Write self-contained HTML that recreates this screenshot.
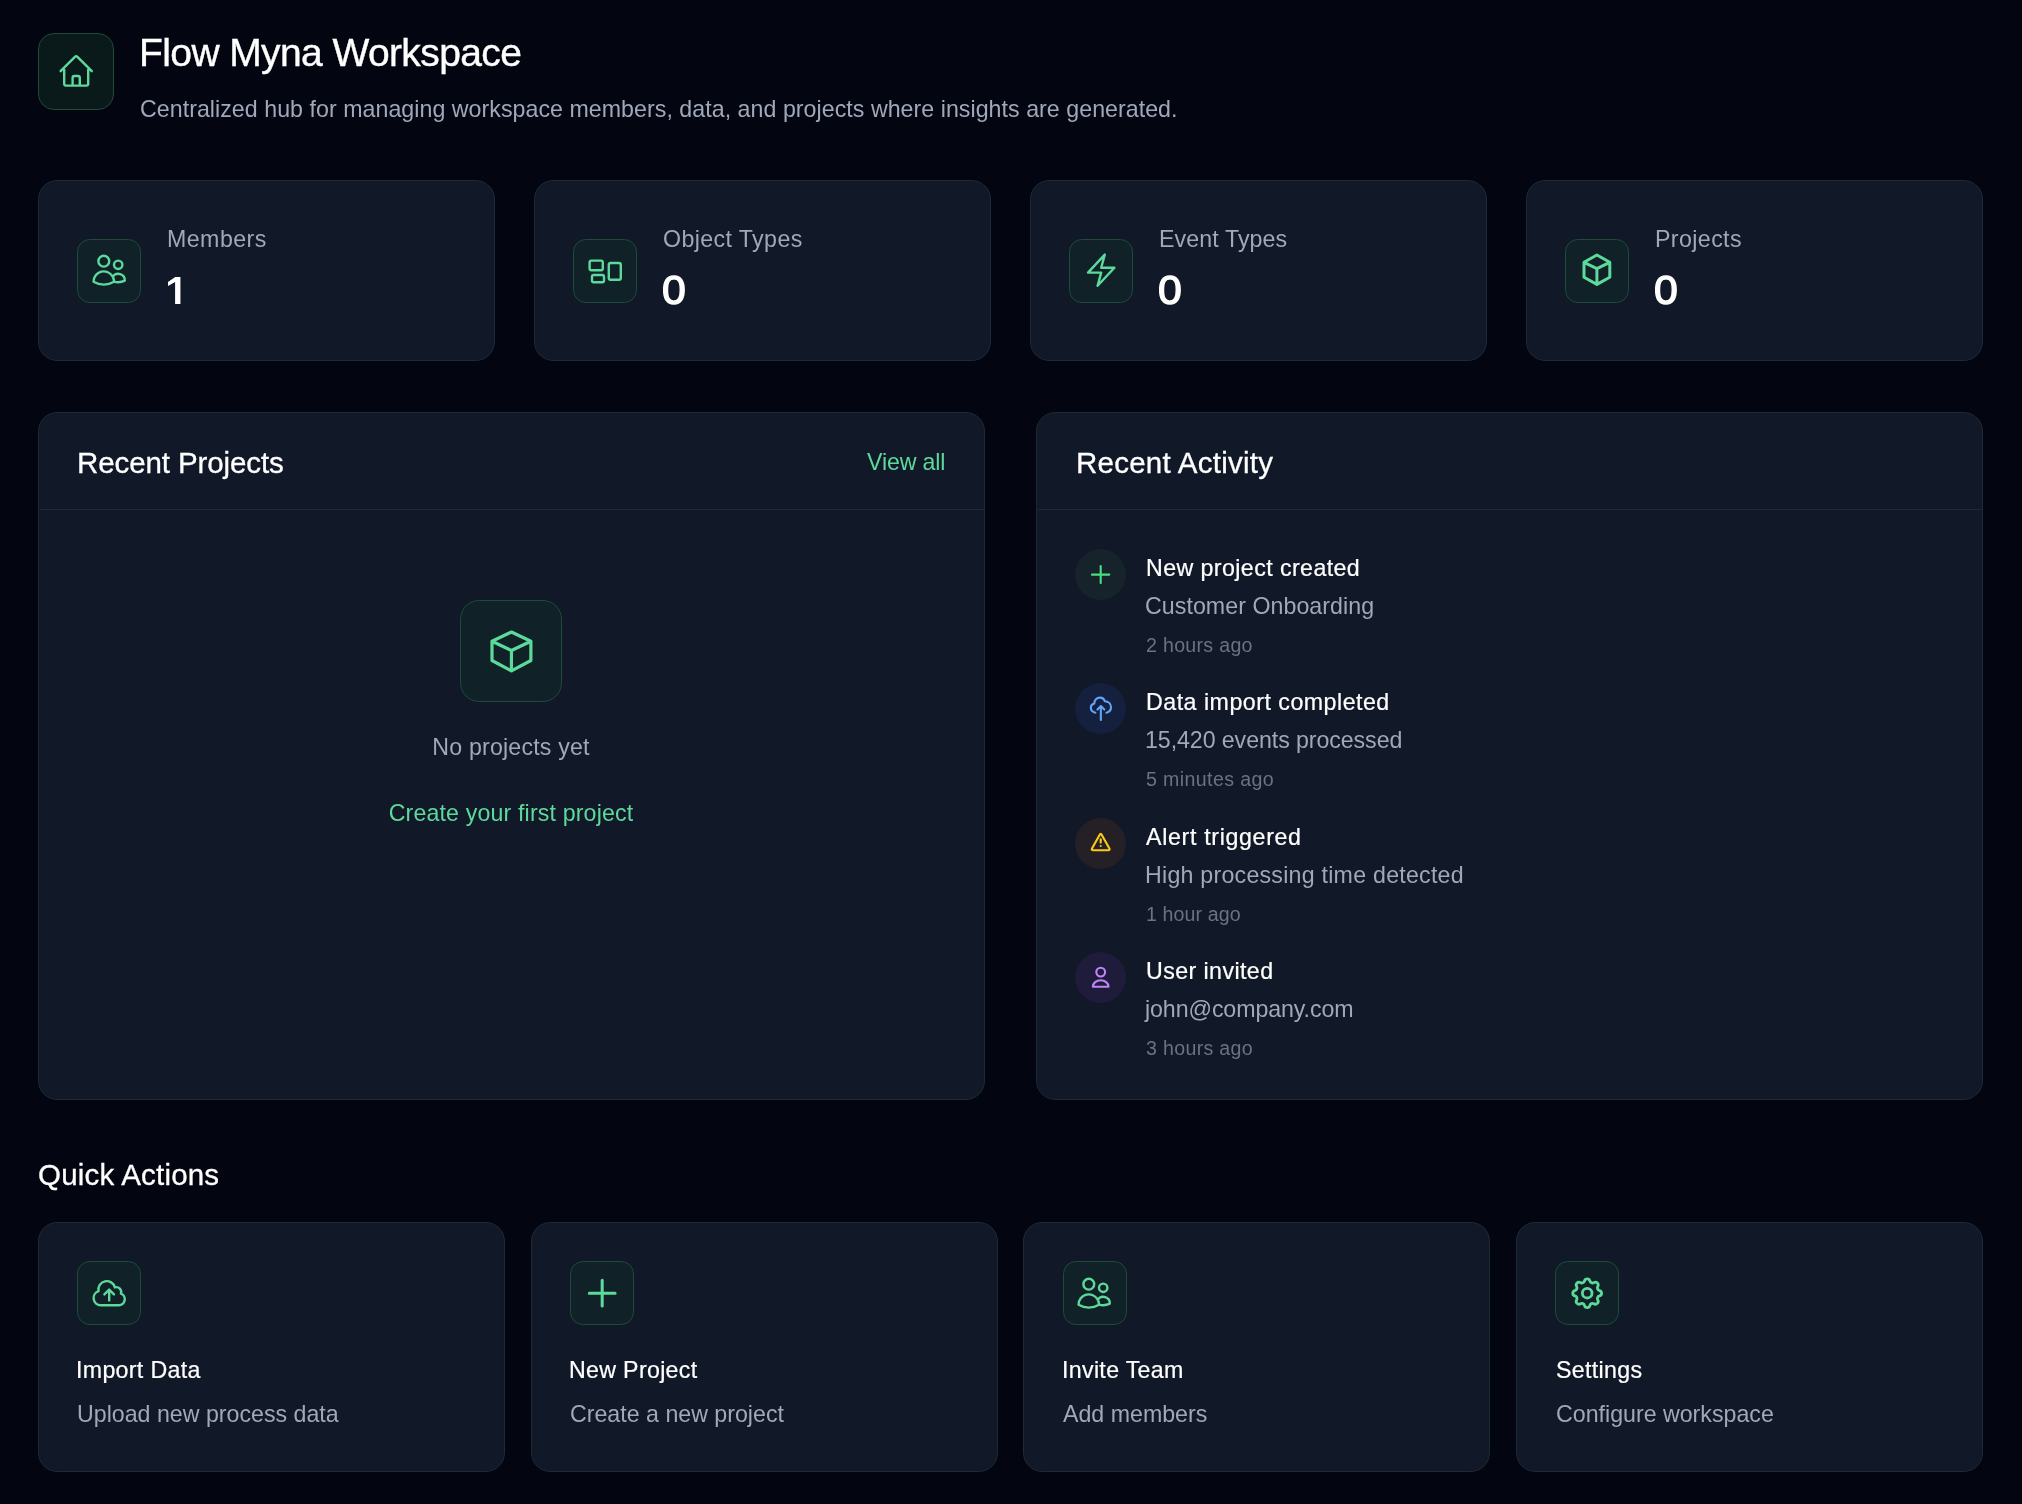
<!DOCTYPE html>
<html><head><meta charset="utf-8"><title>Flow Myna Workspace</title>
<style>
html,body{margin:0;padding:0;}
body{width:2022px;height:1504px;overflow:hidden;position:relative;background:#030611;font-family:"Liberation Sans",sans-serif;-webkit-font-smoothing:antialiased;}
body>div{will-change:transform;}
</style></head><body>
<div style="position:absolute;left:38.4px;top:33px;width:76px;height:76.8px;box-sizing:border-box;background:#0a1a1a;border:1.6px solid #1e4b3a;border-radius:16px;"></div>
<svg style="position:absolute;left:56.7px;top:52px" width="38.4" height="38.4" viewBox="0 0 24 24" fill="none" stroke="#5dd99c" stroke-width="1.5" stroke-linecap="round" stroke-linejoin="round"><path d="m2.25 12 8.954-8.955c.44-.439 1.152-.439 1.591 0L21.75 12M4.5 9.75v10.125c0 .621.504 1.125 1.125 1.125H9.75v-4.875c0-.621.504-1.125 1.125-1.125h2.25c.621 0 1.125.504 1.125 1.125V21h4.125c.621 0 1.125-.504 1.125-1.125V9.75M8.25 21h8.25"/></svg>
<div style="position:absolute;left:138.8px;top:33.45px;font-size:39px;line-height:39px;color:#ffffff;font-weight:400;letter-spacing:-0.6px;-webkit-text-stroke:0.4px #ffffff;white-space:nowrap">Flow Myna Workspace</div>
<div style="position:absolute;left:139.8px;top:97.68px;font-size:23.2px;line-height:23.2px;color:#a0a8b9;font-weight:400;letter-spacing:0.04px;white-space:nowrap">Centralized hub for managing workspace members, data, and projects where insights are generated.</div>
<div style="position:absolute;left:38px;top:180.2px;width:457px;height:180.6px;box-sizing:border-box;background:#111827;border:1.6px solid #1f2937;border-radius:19.2px;"></div>
<div style="position:absolute;left:77.2px;top:239px;width:64px;height:64px;box-sizing:border-box;background:#102227;border:1.6px solid #1e4b3a;border-radius:12.8px;"></div>
<svg style="position:absolute;left:90px;top:250.8px" width="38.4" height="38.4" viewBox="0 0 24 24" fill="none" stroke="#5dd99c" stroke-width="1.5" stroke-linecap="round" stroke-linejoin="round"><path d="M15 19.128a9.38 9.38 0 0 0 2.625.372 9.337 9.337 0 0 0 4.121-.952 4.125 4.125 0 0 0-7.533-2.493M15 19.128v-.003c0-1.113-.285-2.16-.786-3.07M15 19.128v.106A12.318 12.318 0 0 1 8.624 21c-2.331 0-4.512-.645-6.374-1.766l-.001-.109a6.375 6.375 0 0 1 11.964-3.07M12 6.375a3.375 3.375 0 1 1-6.75 0 3.375 3.375 0 0 1 6.75 0Zm8.25 2.25a2.625 2.625 0 1 1-5.25 0 2.625 2.625 0 0 1 5.25 0Z"/></svg>
<div style="position:absolute;left:166.6px;top:227.58px;font-size:23.2px;line-height:23.2px;color:#a0a8b9;font-weight:400;letter-spacing:0.45px;white-space:nowrap">Members</div>
<svg style="position:absolute;left:38px;top:270px" width="200" height="40" viewBox="38 270 200 40"><path fill="#ffffff" d="M167.95 281.95L175.27 276.97H180.42V303.9H175.1V281.95L168.1 286.1Z"/></svg>
<div style="position:absolute;left:534px;top:180.2px;width:457px;height:180.6px;box-sizing:border-box;background:#111827;border:1.6px solid #1f2937;border-radius:19.2px;"></div>
<div style="position:absolute;left:573.2px;top:239px;width:64px;height:64px;box-sizing:border-box;background:#102227;border:1.6px solid #1e4b3a;border-radius:12.8px;"></div>
<svg style="position:absolute;left:586px;top:250.8px" width="38.4" height="38.4" viewBox="0 0 24 24" fill="none" stroke="#5dd99c" stroke-width="1.5" stroke-linecap="round" stroke-linejoin="round"><path d="M2.25 7.125C2.25 6.504 2.754 6 3.375 6h6c.621 0 1.125.504 1.125 1.125v3.75c0 .621-.504 1.125-1.125 1.125h-6a1.125 1.125 0 0 1-1.125-1.125v-3.75ZM14.25 8.625c0-.621.504-1.125 1.125-1.125h5.25c.621 0 1.125.504 1.125 1.125v8.25c0 .621-.504 1.125-1.125 1.125h-5.25a1.125 1.125 0 0 1-1.125-1.125v-8.25ZM3.75 16.125c0-.621.504-1.125 1.125-1.125h5.25c.621 0 1.125.504 1.125 1.125v2.25c0 .621-.504 1.125-1.125 1.125h-5.25a1.125 1.125 0 0 1-1.125-1.125v-2.25Z"/></svg>
<div style="position:absolute;left:662.6px;top:227.58px;font-size:23.2px;line-height:23.2px;color:#a0a8b9;font-weight:400;letter-spacing:0.4px;white-space:nowrap">Object Types</div>
<div style="position:absolute;left:662.3px;top:270.4px;font-size:40px;line-height:40px;color:#ffffff;font-weight:400;-webkit-text-stroke:1.3px #ffffff;transform:scaleX(1.07);transform-origin:0 0;white-space:nowrap">0</div>
<div style="position:absolute;left:1030px;top:180.2px;width:457px;height:180.6px;box-sizing:border-box;background:#111827;border:1.6px solid #1f2937;border-radius:19.2px;"></div>
<div style="position:absolute;left:1069.2px;top:239px;width:64px;height:64px;box-sizing:border-box;background:#102227;border:1.6px solid #1e4b3a;border-radius:12.8px;"></div>
<svg style="position:absolute;left:1082px;top:250.8px" width="38.4" height="38.4" viewBox="0 0 24 24" fill="none" stroke="#5dd99c" stroke-width="1.5" stroke-linecap="round" stroke-linejoin="round"><path d="m3.75 13.5 10.5-11.25L12 10.5h8.25L9.75 21.75 12 13.5H3.75Z"/></svg>
<div style="position:absolute;left:1158.6px;top:227.58px;font-size:23.2px;line-height:23.2px;color:#a0a8b9;font-weight:400;letter-spacing:0.1px;white-space:nowrap">Event Types</div>
<div style="position:absolute;left:1158.3px;top:270.4px;font-size:40px;line-height:40px;color:#ffffff;font-weight:400;-webkit-text-stroke:1.3px #ffffff;transform:scaleX(1.07);transform-origin:0 0;white-space:nowrap">0</div>
<div style="position:absolute;left:1526px;top:180.2px;width:457px;height:180.6px;box-sizing:border-box;background:#111827;border:1.6px solid #1f2937;border-radius:19.2px;"></div>
<div style="position:absolute;left:1565.2px;top:239px;width:64px;height:64px;box-sizing:border-box;background:#102227;border:1.6px solid #1e4b3a;border-radius:12.8px;"></div>
<svg style="position:absolute;left:1580.3px;top:251.2px" width="33.8" height="37.4" viewBox="0 0 33.8 37.4" fill="none" stroke="#5dd99c" stroke-width="3.0" stroke-linecap="round" stroke-linejoin="round"><path d="M16.90 4.00L29.80 11.30L29.80 26.30L16.90 33.40L4.00 26.30L4.00 11.30ZM4.00 11.30L16.90 17.70L29.80 11.30M16.90 17.70L16.90 33.40"/></svg>
<div style="position:absolute;left:1654.6px;top:227.58px;font-size:23.2px;line-height:23.2px;color:#a0a8b9;font-weight:400;letter-spacing:0.4px;white-space:nowrap">Projects</div>
<div style="position:absolute;left:1654.3px;top:270.4px;font-size:40px;line-height:40px;color:#ffffff;font-weight:400;-webkit-text-stroke:1.3px #ffffff;transform:scaleX(1.07);transform-origin:0 0;white-space:nowrap">0</div>
<div style="position:absolute;left:38px;top:412px;width:946.9px;height:687.5px;box-sizing:border-box;background:#111827;border:1.6px solid #1f2937;border-radius:19.2px;"></div>
<div style="position:absolute;left:39.6px;top:509px;width:943.7px;height:1px;background:#1f2937"></div>
<div style="position:absolute;left:1036.1px;top:412px;width:946.9px;height:687.5px;box-sizing:border-box;background:#111827;border:1.6px solid #1f2937;border-radius:19.2px;"></div>
<div style="position:absolute;left:1037.7px;top:509px;width:943.7px;height:1px;background:#1f2937"></div>
<div style="position:absolute;left:76.6px;top:447.82px;font-size:29.5px;line-height:29.5px;color:#ffffff;font-weight:400;letter-spacing:-0.1px;-webkit-text-stroke:0.3px #ffffff;white-space:nowrap">Recent Projects</div>
<div style="position:absolute;right:1076.5px;top:450.58px;font-size:23.2px;line-height:23.2px;color:#5dd99c;font-weight:400;letter-spacing:-0.15px;white-space:nowrap">View all</div>
<div style="position:absolute;left:1075.5px;top:447.82px;font-size:29.5px;line-height:29.5px;color:#ffffff;font-weight:400;letter-spacing:0.25px;-webkit-text-stroke:0.3px #ffffff;white-space:nowrap">Recent Activity</div>
<div style="position:absolute;left:460px;top:599.8px;width:102.4px;height:102.4px;box-sizing:border-box;background:#102227;border:1.6px solid #1e4b3a;border-radius:19.2px;"></div>
<svg style="position:absolute;left:488.4px;top:628.4px" width="46.9" height="46.9" viewBox="0 0 46.9 46.9" fill="none" stroke="#5dd99c" stroke-width="3.2" stroke-linecap="round" stroke-linejoin="round"><path d="M23.45 4.00L42.90 13.30L42.90 32.50L23.45 42.90L4.00 32.50L4.00 13.30ZM4.00 13.30L23.45 22.50L42.90 13.30M23.45 22.50L23.45 42.90"/></svg>
<div style="position:absolute;left:-488.6px;width:2000px;text-align:center;top:735.68px;font-size:23.2px;line-height:23.2px;color:#a0a8b9;font-weight:400;letter-spacing:0.18px;white-space:nowrap">No projects yet</div>
<div style="position:absolute;left:-488.8px;width:2000px;text-align:center;top:801.78px;font-size:23.2px;line-height:23.2px;color:#5dd99c;font-weight:400;letter-spacing:0.15px;white-space:nowrap">Create your first project</div>
<div style="position:absolute;left:1075px;top:549px;width:51.2px;height:51.2px;border-radius:50%;background:#17232a"></div>
<svg style="position:absolute;left:1075px;top:549px" width="52" height="52" viewBox="0 0 52 52" fill="none" stroke="#4ade80" stroke-width="2.1" stroke-linecap="round" stroke-linejoin="round"><path d="M25.7 17.1v17M16.9 25.6h17.4"/></svg>
<div style="position:absolute;left:1145.5px;top:557.08px;font-size:23.2px;line-height:23.2px;color:#ffffff;font-weight:400;letter-spacing:0.42px;-webkit-text-stroke:0.22px #ffffff;white-space:nowrap">New project created</div>
<div style="position:absolute;left:1145.3px;top:595.08px;font-size:23.2px;line-height:23.2px;color:#a0a8b9;font-weight:400;letter-spacing:0.05px;white-space:nowrap">Customer Onboarding</div>
<div style="position:absolute;left:1145.8px;top:635.84px;font-size:19.6px;line-height:19.6px;color:#6b7280;font-weight:400;letter-spacing:0.3px;white-space:nowrap">2 hours ago</div>
<div style="position:absolute;left:1075px;top:683.4px;width:51.2px;height:51.2px;border-radius:50%;background:#151f3e"></div>
<svg style="position:absolute;left:1075px;top:683.4px" width="52" height="52" viewBox="0 0 52 52" fill="none" stroke="#60a5fa" stroke-width="2.1" stroke-linecap="round" stroke-linejoin="round"><g transform="translate(11 10.6)"><path d="M9.4 19.15C7.2 18.6 4.8 16.8 4.8 14.2C4.8 11.8 6.3 10.4 8.3 9.9C8.3 6.4 10.8 4 13.8 4C16.2 4 18.2 5.6 18.8 7.7C22.4 7.9 25 10.4 25 13.6C25 16.2 23 18.4 20.4 19.1M11.4 16L14.9 12.5L18.3 16M14.85 12.8V26.3"/></g></svg>
<div style="position:absolute;left:1145.5px;top:691.41px;font-size:23.2px;line-height:23.2px;color:#ffffff;font-weight:400;letter-spacing:0.5px;-webkit-text-stroke:0.22px #ffffff;white-space:nowrap">Data import completed</div>
<div style="position:absolute;left:1145.3px;top:729.41px;font-size:23.2px;line-height:23.2px;color:#a0a8b9;font-weight:400;letter-spacing:-0.08px;white-space:nowrap">15,420 events processed</div>
<div style="position:absolute;left:1145.8px;top:770.17px;font-size:19.6px;line-height:19.6px;color:#6b7280;font-weight:400;letter-spacing:0.38px;white-space:nowrap">5 minutes ago</div>
<div style="position:absolute;left:1075px;top:817.8px;width:51.2px;height:51.2px;border-radius:50%;background:#252025"></div>
<svg style="position:absolute;left:1075px;top:817.8px" width="52" height="52" viewBox="0 0 52 52" fill="none" stroke="#facc15" stroke-width="2.1" stroke-linecap="round" stroke-linejoin="round"><path d="M24.58 16.91Q25.70 14.90 26.82 16.91L34.28 30.19Q35.40 32.20 33.10 32.20L18.30 32.20Q16.00 32.20 17.12 30.19Z"/><path d="M25.7 21.4v3.2M25.7 28h.02"/></svg>
<div style="position:absolute;left:1145.5px;top:825.74px;font-size:23.2px;line-height:23.2px;color:#ffffff;font-weight:400;letter-spacing:0.67px;-webkit-text-stroke:0.22px #ffffff;white-space:nowrap">Alert triggered</div>
<div style="position:absolute;left:1145.3px;top:863.74px;font-size:23.2px;line-height:23.2px;color:#a0a8b9;font-weight:400;letter-spacing:0.24px;white-space:nowrap">High processing time detected</div>
<div style="position:absolute;left:1145.8px;top:904.5px;font-size:19.6px;line-height:19.6px;color:#6b7280;font-weight:400;letter-spacing:0.1px;white-space:nowrap">1 hour ago</div>
<div style="position:absolute;left:1075px;top:952.2px;width:51.2px;height:51.2px;border-radius:50%;background:#1f1b3a"></div>
<svg style="position:absolute;left:1075px;top:952.2px" width="52" height="52" viewBox="0 0 52 52" fill="none" stroke="#c084fc" stroke-width="2.1" stroke-linecap="round" stroke-linejoin="round"><circle cx="25.7" cy="20.1" r="4.4"/><path d="M17.9 34.7C17.9 30.9 21.4 28.3 25.7 28.3C30 28.3 33.5 30.9 33.5 34.7Z"/></svg>
<div style="position:absolute;left:1145.5px;top:960.07px;font-size:23.2px;line-height:23.2px;color:#ffffff;font-weight:400;letter-spacing:0.42px;-webkit-text-stroke:0.22px #ffffff;white-space:nowrap">User invited</div>
<div style="position:absolute;left:1145.3px;top:998.07px;font-size:23.2px;line-height:23.2px;color:#a0a8b9;font-weight:400;letter-spacing:-0.1px;white-space:nowrap">john@company.com</div>
<div style="position:absolute;left:1145.8px;top:1038.83px;font-size:19.6px;line-height:19.6px;color:#6b7280;font-weight:400;letter-spacing:0.32px;white-space:nowrap">3 hours ago</div>
<div style="position:absolute;left:38px;top:1159.52px;font-size:29.5px;line-height:29.5px;color:#ffffff;font-weight:400;letter-spacing:0.2px;-webkit-text-stroke:0.3px #ffffff;white-space:nowrap">Quick Actions</div>
<div style="position:absolute;left:38px;top:1222.3px;width:467.05px;height:250.3px;box-sizing:border-box;background:#111827;border:1.6px solid #1f2937;border-radius:19.2px;"></div>
<div style="position:absolute;left:77.2px;top:1261.3px;width:64px;height:64px;box-sizing:border-box;background:#102227;border:1.6px solid #1e4b3a;border-radius:12.8px;"></div>
<svg style="position:absolute;left:90px;top:1274.1px" width="38.4" height="38.4" viewBox="0 0 24 24" fill="none" stroke="#5dd99c" stroke-width="1.5" stroke-linecap="round" stroke-linejoin="round"><path d="M12 16.5V9.75m0 0 3 3m-3-3-3 3M6.75 19.5a4.5 4.5 0 0 1-1.41-8.775 5.25 5.25 0 0 1 10.233-2.33 3 3 0 0 1 3.758 3.848A3.752 3.752 0 0 1 18 19.5H6.75Z"/></svg>
<div style="position:absolute;left:76.2px;top:1358.58px;font-size:23.2px;line-height:23.2px;color:#ffffff;font-weight:400;letter-spacing:0.32px;-webkit-text-stroke:0.22px #ffffff;white-space:nowrap">Import Data</div>
<div style="position:absolute;left:76.8px;top:1402.58px;font-size:23.2px;line-height:23.2px;color:#a0a8b9;font-weight:400;white-space:nowrap">Upload new process data</div>
<div style="position:absolute;left:530.65px;top:1222.3px;width:467.05px;height:250.3px;box-sizing:border-box;background:#111827;border:1.6px solid #1f2937;border-radius:19.2px;"></div>
<div style="position:absolute;left:569.85px;top:1261.3px;width:64px;height:64px;box-sizing:border-box;background:#102227;border:1.6px solid #1e4b3a;border-radius:12.8px;"></div>
<svg style="position:absolute;left:582.65px;top:1274.1px" width="38.4" height="38.4" viewBox="0 0 24 24" fill="none" stroke="#5dd99c" stroke-width="1.9" stroke-linecap="round" stroke-linejoin="round"><path d="M12 3.93v16.14M3.93 12h16.14"/></svg>
<div style="position:absolute;left:569.3px;top:1358.58px;font-size:23.2px;line-height:23.2px;color:#ffffff;font-weight:400;letter-spacing:0.32px;-webkit-text-stroke:0.22px #ffffff;white-space:nowrap">New Project</div>
<div style="position:absolute;left:569.9px;top:1402.58px;font-size:23.2px;line-height:23.2px;color:#a0a8b9;font-weight:400;white-space:nowrap">Create a new project</div>
<div style="position:absolute;left:1023.3px;top:1222.3px;width:467.05px;height:250.3px;box-sizing:border-box;background:#111827;border:1.6px solid #1f2937;border-radius:19.2px;"></div>
<div style="position:absolute;left:1062.5px;top:1261.3px;width:64px;height:64px;box-sizing:border-box;background:#102227;border:1.6px solid #1e4b3a;border-radius:12.8px;"></div>
<svg style="position:absolute;left:1075.3px;top:1274.1px" width="38.4" height="38.4" viewBox="0 0 24 24" fill="none" stroke="#5dd99c" stroke-width="1.5" stroke-linecap="round" stroke-linejoin="round"><path d="M15 19.128a9.38 9.38 0 0 0 2.625.372 9.337 9.337 0 0 0 4.121-.952 4.125 4.125 0 0 0-7.533-2.493M15 19.128v-.003c0-1.113-.285-2.16-.786-3.07M15 19.128v.106A12.318 12.318 0 0 1 8.624 21c-2.331 0-4.512-.645-6.374-1.766l-.001-.109a6.375 6.375 0 0 1 11.964-3.07M12 6.375a3.375 3.375 0 1 1-6.75 0 3.375 3.375 0 0 1 6.75 0Zm8.25 2.25a2.625 2.625 0 1 1-5.25 0 2.625 2.625 0 0 1 5.25 0Z"/></svg>
<div style="position:absolute;left:1062.4px;top:1358.58px;font-size:23.2px;line-height:23.2px;color:#ffffff;font-weight:400;letter-spacing:0.32px;-webkit-text-stroke:0.22px #ffffff;white-space:nowrap">Invite Team</div>
<div style="position:absolute;left:1063px;top:1402.58px;font-size:23.2px;line-height:23.2px;color:#a0a8b9;font-weight:400;white-space:nowrap">Add members</div>
<div style="position:absolute;left:1515.95px;top:1222.3px;width:467.05px;height:250.3px;box-sizing:border-box;background:#111827;border:1.6px solid #1f2937;border-radius:19.2px;"></div>
<div style="position:absolute;left:1555.15px;top:1261.3px;width:64px;height:64px;box-sizing:border-box;background:#102227;border:1.6px solid #1e4b3a;border-radius:12.8px;"></div>
<svg style="position:absolute;left:1567.95px;top:1274.1px" width="38.4" height="38.4" viewBox="0 0 24 24" fill="none" stroke="#5dd99c" stroke-width="1.75" stroke-linecap="round" stroke-linejoin="round"><path d="M10.325 4.317c.426-1.756 2.924-1.756 3.35 0a1.724 1.724 0 0 0 2.573 1.066c1.543-.94 3.31.826 2.37 2.37a1.724 1.724 0 0 0 1.065 2.572c1.756.426 1.756 2.924 0 3.35a1.724 1.724 0 0 0-1.066 2.573c.94 1.543-.826 3.31-2.37 2.37a1.724 1.724 0 0 0-2.572 1.065c-.426 1.756-2.924 1.756-3.35 0a1.724 1.724 0 0 0-2.573-1.066c-1.543.94-3.31-.826-2.37-2.37a1.724 1.724 0 0 0-1.065-2.572c-1.756-.426-1.756-2.924 0-3.35a1.724 1.724 0 0 0 1.066-2.573c-.94-1.543.826-3.31 2.37-2.37 1 .608 2.296.07 2.572-1.065Z"/><circle cx="12" cy="12" r="3"/></svg>
<div style="position:absolute;left:1555.5px;top:1358.58px;font-size:23.2px;line-height:23.2px;color:#ffffff;font-weight:400;letter-spacing:0.32px;-webkit-text-stroke:0.22px #ffffff;white-space:nowrap">Settings</div>
<div style="position:absolute;left:1556.1px;top:1402.58px;font-size:23.2px;line-height:23.2px;color:#a0a8b9;font-weight:400;white-space:nowrap">Configure workspace</div>
</body></html>
